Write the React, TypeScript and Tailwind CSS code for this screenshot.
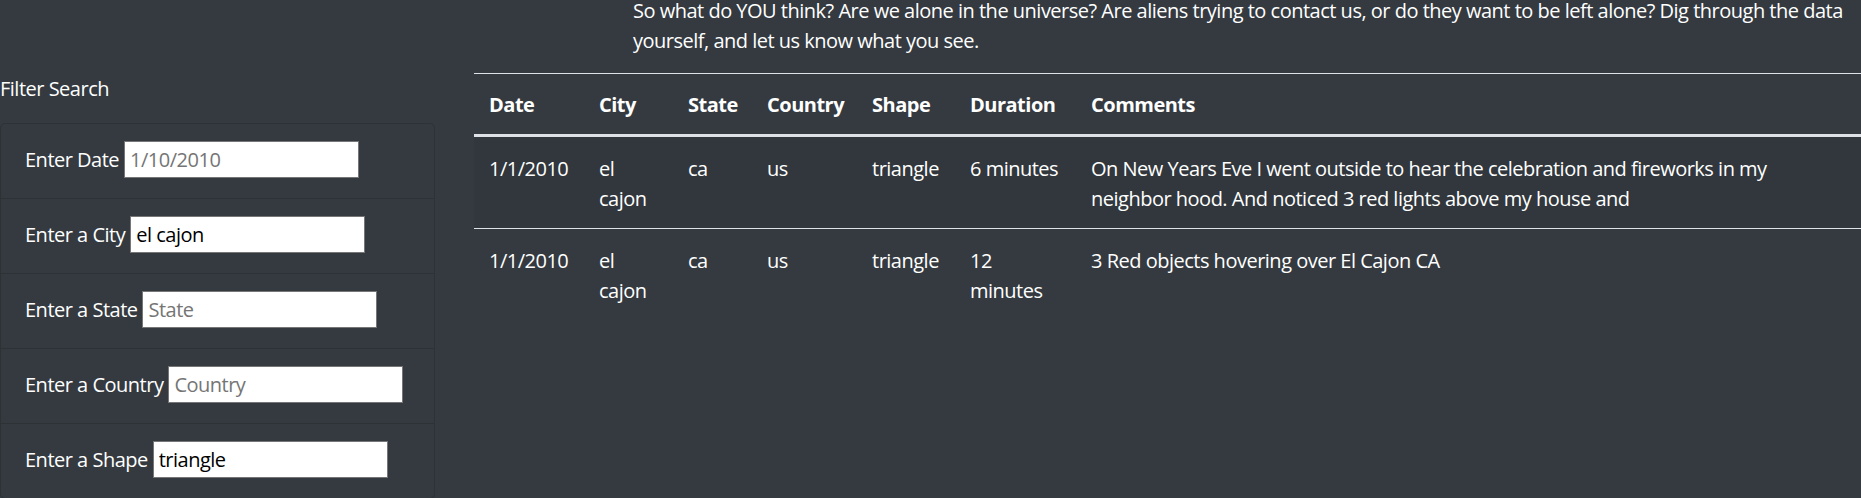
import React from "react";

const fields = [
  { label: "Enter Date", placeholder: "1/10/2010", value: "" },
  { label: "Enter a City", placeholder: "City", value: "el cajon" },
  { label: "Enter a State", placeholder: "State", value: "" },
  { label: "Enter a Country", placeholder: "Country", value: "" },
  { label: "Enter a Shape", placeholder: "Shape", value: "triangle" },
];

const rows = [
  {
    date: "1/1/2010",
    city: "el cajon",
    state: "ca",
    country: "us",
    shape: "triangle",
    duration: "6 minutes",
    comments:
      "On New Years Eve I went outside to hear the celebration and fireworks in my neighbor hood. And noticed 3 red lights above my house and",
  },
  {
    date: "1/1/2010",
    city: "el cajon",
    state: "ca",
    country: "us",
    shape: "triangle",
    duration: "12 minutes",
    comments: "3 Red objects hovering over El Cajon CA",
  },
];

const headers = ["Date", "City", "State", "Country", "Shape", "Duration", "Comments"];

export default function App() {
  return (
    <div className="h-[498px] w-[1861px] overflow-hidden bg-[#343a40] font-['Open_Sans',sans-serif] text-[20px] leading-[30px] tracking-[-0.5px] text-white">
      <p className="-mt-[4px] ml-[633px]">
        So what do YOU think? Are we alone in the universe? Are aliens trying to contact us, or do they want to be left
        alone? Dig through the data yourself, and let us know what you see.
      </p>
      <div className="mt-[17px] flex">
        <div className="w-[435px] shrink-0">
          <div className="pt-[1px]">Filter Search</div>
          <div className="mt-[19px] rounded-[5px] border border-[#2d3237]">
            {fields.map((f, i) => (
              <div
                key={f.label}
                className={
                  i === 0
                    ? "flex h-[74px] items-center gap-[5px] pb-[20px] pl-[24px] pt-[16px]"
                    : "flex h-[75px] items-center gap-[5px] border-t border-[#2d3237] pb-[20px] pl-[24px] pt-[16px]"
                }
              >
                <label className="pt-[2px]">{f.label}</label>
                <input
                  type="text"
                  defaultValue={f.value}
                  placeholder={f.placeholder}
                  className="h-[37px] w-[235px] border border-[#767676] bg-white px-[5px] pt-[1px] text-[20px] text-black outline-none placeholder:text-[#757575]"
                />
              </div>
            ))}
          </div>
        </div>
        <div className="ml-[39px] flex-1">
          <table className="w-full table-fixed border-collapse text-left">
            <colgroup>
              <col className="w-[110px]" />
              <col className="w-[89px]" />
              <col className="w-[79px]" />
              <col className="w-[105px]" />
              <col className="w-[98px]" />
              <col className="w-[121px]" />
              <col />
            </colgroup>
            <thead>
              <tr>
                {headers.map((h) => (
                  <th
                    key={h}
                    className="border-t border-b-[3px] border-t-[#dee2e6] border-b-[#dee2e6] px-[15px] pb-[14px] pt-[16px] align-top font-bold"
                  >
                    {h}
                  </th>
                ))}
              </tr>
            </thead>
            <tbody>
              {rows.map((r, i) => (
                <tr key={i} className={i % 2 === 0 ? "bg-black/5" : ""}>
                  <td className="border-t border-[#dee2e6] px-[15px] pb-[14px] pt-[17px] align-top">{r.date}</td>
                  <td className="border-t border-[#dee2e6] px-[15px] pb-[14px] pt-[17px] align-top">{r.city}</td>
                  <td className="border-t border-[#dee2e6] px-[15px] pb-[14px] pt-[17px] align-top">{r.state}</td>
                  <td className="border-t border-[#dee2e6] px-[15px] pb-[14px] pt-[17px] align-top">{r.country}</td>
                  <td className="border-t border-[#dee2e6] px-[15px] pb-[14px] pt-[17px] align-top">{r.shape}</td>
                  <td className="border-t border-[#dee2e6] px-[15px] pb-[14px] pt-[17px] align-top">{r.duration}</td>
                  <td className="border-t border-[#dee2e6] px-[15px] pb-[14px] pt-[17px] align-top">
                    <div className="max-w-[720px]">{r.comments}</div>
                  </td>
                </tr>
              ))}
            </tbody>
          </table>
        </div>
      </div>
    </div>
  );
}
